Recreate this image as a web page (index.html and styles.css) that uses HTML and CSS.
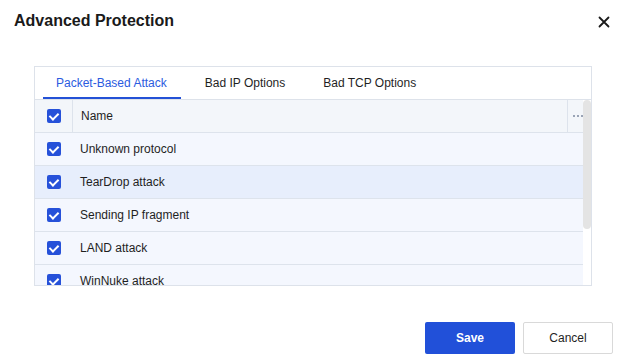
FILE: index.html
```html
<!DOCTYPE html>
<html lang="en">
<head>
    <meta charset="UTF-8">
    <meta name="viewport" content="width=device-width, initial-scale=1.0">
    <title>Advanced Protection</title>
    <link rel="stylesheet" href="styles.css">
</head>
<body>
    <div class="dialog">
        <div class="head">
            <div class="title">Advanced Protection</div>
            <svg class="close" width="12" height="12" viewBox="0 0 12 12">
                <path d="M1.5 1.5 L10.5 10.5 M10.5 1.5 L1.5 10.5" stroke="#1a1a1a" stroke-width="1.8" stroke-linecap="round"/>
            </svg>
        </div>

        <div class="panel">
            <div class="tabs">
                <div class="tab active">Packet-Based Attack</div>
                <div class="tab">Bad IP Options</div>
                <div class="tab">Bad TCP Options</div>
            </div>
            <div class="tablebox">
                <div class="rows">
                    <div class="row headrow">
                        <div class="chkcell"><span class="chk"></span></div>
                        <div class="namecell">Name</div>
                        <div class="morecell">
                            <svg width="10" height="4" viewBox="0 0 10 4">
                                <rect x="0" y="1" width="2" height="2" fill="#9aa4b6"/>
                                <rect x="4" y="1" width="2" height="2" fill="#9aa4b6"/>
                                <rect x="8" y="1" width="2" height="2" fill="#9aa4b6"/>
                            </svg>
                        </div>
                    </div>
                    <div class="row">
                        <div class="chkcell"><span class="chk"></span></div>
                        <div class="namecell">Unknown protocol</div>
                    </div>
                    <div class="row hover">
                        <div class="chkcell"><span class="chk"></span></div>
                        <div class="namecell">TearDrop attack</div>
                    </div>
                    <div class="row">
                        <div class="chkcell"><span class="chk"></span></div>
                        <div class="namecell">Sending IP fragment</div>
                    </div>
                    <div class="row">
                        <div class="chkcell"><span class="chk"></span></div>
                        <div class="namecell">LAND attack</div>
                    </div>
                    <div class="row">
                        <div class="chkcell"><span class="chk"></span></div>
                        <div class="namecell">WinNuke attack</div>
                    </div>
                </div>
                <div class="scroll"><div class="thumb"></div></div>
            </div>
        </div>

        <div class="foot">
            <button class="btn save">Save</button>
            <button class="btn cancel">Cancel</button>
        </div>
    </div>
</body>
</html>
```

FILE: styles.css
```css
html{
  font-family: "Liberation Sans", Arial, sans-serif;
}

body{
  margin: 0;
  background: #fff;
  color: #1f1f1f;
}

.dialog{
  width: 625px;
  height: 363px;
  position: relative;
}

.head{
  display: flex;
  justify-content: space-between;
  align-items: center;
  padding: 11px 15px 0 14px;
  height: 20px;
}

.title{
  font-size: 16px;
  font-weight: bold;
  line-height: 20px;
  color: #1a1a1a;
}

.close{
  margin-top: 1px;
}

.panel{
  margin: 35px 0 0 34px;
  width: 556px;
  height: 218px;
  border: 1px solid #dde2ea;
  overflow: hidden;
}

.tabs{
  display: flex;
  gap: 11px;
  padding-left: 8px;
  height: 32px;
  border-bottom: 1px solid #dde2ea;
}

.tab{
  font-size: 12px;
  line-height: 32px;
  padding: 0 14px 0 13px;
  color: #1f1f1f;
  box-sizing: border-box;
}

.tab.active{
  color: #2b5be0;
  border-bottom: 2px solid #2451d6;
  line-height: 32px;
  height: 32px;
}

.tablebox{
  display: flex;
  height: 185px;
}

.rows{
  flex: 1;
  overflow: hidden;
}

.row{
  display: flex;
  align-items: center;
  height: 32px;
  border-bottom: 1px solid #dde3ec;
  background: #f4f7fe;
  font-size: 12px;
}

.row.hover{
  background: #e7eefc;
}

.headrow{
  background: #f3f6fa;
}

.chkcell{
  width: 38px;
  height: 100%;
  display: flex;
  align-items: center;
  justify-content: center;
  box-sizing: border-box;
}

.headrow .chkcell{
  border-right: 1px solid #dde3ec;
}

.chk{
  width: 14px;
  height: 14px;
  border-radius: 2px;
  background: #2651d9;
  position: relative;
}

.chk::after{
  content: "";
  position: absolute;
  left: 4px;
  top: 1.5px;
  width: 4px;
  height: 7px;
  border: solid #fff;
  border-width: 0 2px 2px 0;
  transform: rotate(45deg);
}

.namecell{
  flex: 1;
  padding-left: 8px;
}

.headrow .namecell{
  padding-left: 8px;
}

.row:not(.headrow) .namecell{
  padding-left: 7px;
}

.morecell{
  width: 16px;
  height: 100%;
  border-left: 1px solid #dde3ec;
  display: flex;
  align-items: center;
  padding-left: 5px;
  box-sizing: border-box;
  overflow: hidden;
}

.scroll{
  width: 8px;
  background: #fff;
}

.thumb{
  height: 129px;
  border-radius: 4px;
  background: #e4e4e4;
}

.foot{
  display: flex;
  justify-content: flex-end;
  gap: 8px;
  padding-right: 12px;
  margin-top: 36px;
}

.btn{
  width: 90px;
  height: 32px;
  font-family: "Liberation Sans", Arial, sans-serif;
  font-size: 12px;
  border-radius: 2px;
  cursor: pointer;
}

.save{
  background: #2150d9;
  color: #fff;
  border: none;
  font-weight: bold;
}

.cancel{
  background: #fff;
  color: #1f1f1f;
  border: 1px solid #d9d9d9;
}
```
